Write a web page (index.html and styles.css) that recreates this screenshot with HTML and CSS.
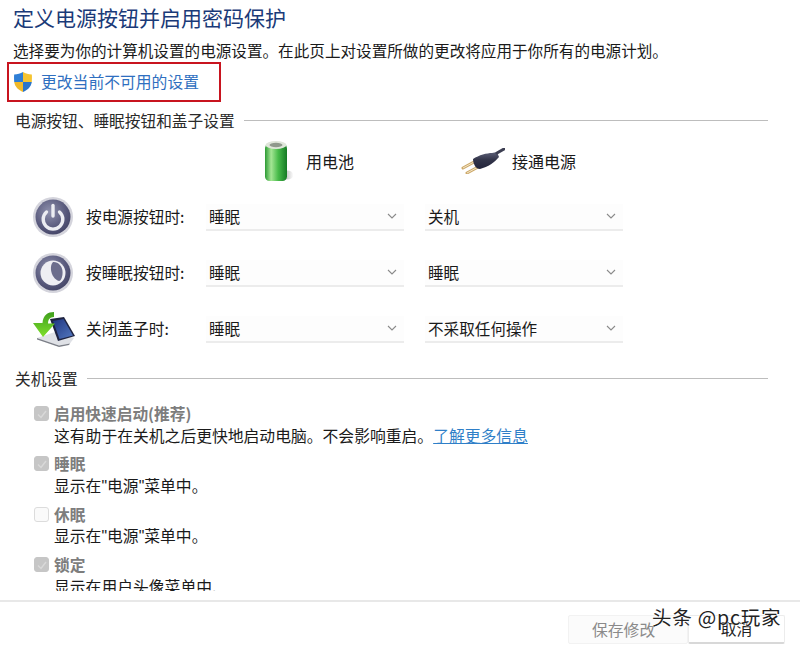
FILE: index.html
```html
<!DOCTYPE html>
<html lang="zh-CN">
<head>
<meta charset="utf-8">
<title>定义电源按钮并启用密码保护</title>
<link rel="stylesheet" href="styles.css">
</head>
<body>
<div class="page">
  <main class="content">
    <h1 class="title">定义电源按钮并启用密码保护</h1>
    <p class="intro">选择要为你的计算机设置的电源设置。在此页上对设置所做的更改将应用于你所有的电源计划。</p>
    <div class="elevate">
      <svg class="shield" viewBox="0 0 20 22" width="20" height="22">
        <path d="M10 1 L10 11 L1.2 11 C1 7 1 5 1.2 3.500 C4.500 3.500 7.500 2.600 10 1Z" fill="#2f7fd6"/>
        <path d="M10 1 C12.500 2.600 15.500 3.500 18.800 3.500 C19 5 19 7 18.800 11 L10 11Z" fill="#f5c431"/>
        <path d="M1.200 11 L10 11 L10 21 C5.500 19 2 16 1.200 11Z" fill="#f0b92a"/>
        <path d="M10 11 L18.800 11 C18 16 14.500 19 10 21Z" fill="#2a74c9"/>
      </svg>
      <a class="elevate-link">更改当前不可用的设置</a>
    </div>

    <div class="section-head first"><span>电源按钮、睡眠按钮和盖子设置</span><i class="rule"></i></div>

    <div class="power-grid">
      <div class="col-head col-one">
        <svg viewBox="0 0 30 44" width="30" height="44">
          <defs>
            <linearGradient id="bat" x1="0" x2="1" y1="0" y2="0">
              <stop offset="0" stop-color="#2c9a34"/><stop offset=".28" stop-color="#a5e695"/><stop offset=".6" stop-color="#48bb4a"/><stop offset="1" stop-color="#157a24"/>
            </linearGradient>
            <linearGradient id="batshadow" x1="0" x2="1" y1="0" y2="0">
              <stop offset="0" stop-color="#9a9a9a"/><stop offset="1" stop-color="#fff"/>
            </linearGradient>
          </defs>
          <ellipse cx="23" cy="36" rx="6.500" ry="4.500" fill="url(#batshadow)"/>
          <rect x="1" y="5" width="22" height="37" rx="4.500" fill="url(#bat)"/>
          <ellipse cx="12" cy="6" rx="10.500" ry="4" fill="#dfe5da"/>
          <ellipse cx="12" cy="6" rx="6.500" ry="2.200" fill="#8f988c"/>
        </svg>
        <span>用电池</span>
      </div>
      <div class="col-head col-two">
        <svg viewBox="0 0 44 26" width="44" height="26">
          <defs>
            <linearGradient id="plugbody" x1="0" x2="0" y1="0" y2="1">
              <stop offset="0" stop-color="#5d6078"/><stop offset=".45" stop-color="#33354a"/><stop offset="1" stop-color="#23243a"/>
            </linearGradient>
          </defs>
          <path d="M2 20 L13 14 M6 25 L17 19" stroke="#cda96a" stroke-width="3" stroke-linecap="round"/>
          <path d="M2 20 L13 14 M6 25 L17 19" stroke="#f3e6c8" stroke-width="1"/>
          <path d="M12 11 C18 7 26 5 31 5 L36 4 L38 9 C34 14 27 19 19 21 C15 21 12 16 12 11Z" fill="url(#plugbody)"/>
          <path d="M36 5 L43 1" stroke="#3d3f52" stroke-width="3" stroke-linecap="round"/>
        </svg>
        <span>接通电源</span>
      </div>

      <svg class="row-icon" viewBox="0 0 42 42" width="42" height="42">
        <defs>
          <radialGradient id="orb" cx=".4" cy=".35" r=".75">
            <stop offset="0" stop-color="#8f91ad"/><stop offset=".65" stop-color="#56577a"/><stop offset="1" stop-color="#3f4060"/>
          </radialGradient>
        </defs>
        <circle cx="20" cy="21" r="20" fill="#d4d4dc"/>
        <circle cx="20" cy="21" r="17.500" fill="url(#orb)"/>
        <path d="M13.500 16 A9.800 9.800 0 1 0 26.500 16" fill="none" stroke="#ecedf2" stroke-width="3.400" stroke-linecap="round"/>
        <path d="M20 9.500 V20" stroke="#ecedf2" stroke-width="3.400" stroke-linecap="round"/>
      </svg>
      <label class="row-label">按电源按钮时:</label>
      <div class="combo"><span>睡眠</span><svg viewBox="0 0 10 6" width="10" height="6"><path d="M1 1 L5 5 L9 1" fill="none" stroke="#8a8a8a" stroke-width="1.100"/></svg></div>
      <div class="combo"><span>关机</span><svg viewBox="0 0 10 6" width="10" height="6"><path d="M1 1 L5 5 L9 1" fill="none" stroke="#8a8a8a" stroke-width="1.100"/></svg></div>

      <svg class="row-icon" viewBox="0 0 42 42" width="42" height="42">
        <circle cx="20" cy="21" r="20" fill="#d4d4dc"/>
        <circle cx="20" cy="21" r="17.500" fill="url(#orb)"/>
        <circle cx="20" cy="21" r="12.500" fill="#eeeef3"/>
        <path d="M20 10 C25 9.500 29 14 29.500 19 C30 24 28 29 26 29 C22 28 18.500 23 18 18 C17.700 15 18 12 20 10Z" fill="#6c6d8c"/>
      </svg>
      <label class="row-label">按睡眠按钮时:</label>
      <div class="combo"><span>睡眠</span><svg viewBox="0 0 10 6" width="10" height="6"><path d="M1 1 L5 5 L9 1" fill="none" stroke="#8a8a8a" stroke-width="1.100"/></svg></div>
      <div class="combo"><span>睡眠</span><svg viewBox="0 0 10 6" width="10" height="6"><path d="M1 1 L5 5 L9 1" fill="none" stroke="#8a8a8a" stroke-width="1.100"/></svg></div>

      <svg class="row-icon" viewBox="0 0 42 42" width="42" height="42">
        <defs>
          <linearGradient id="scr" x1="0" x2="1" y1="0" y2="1">
            <stop offset="0" stop-color="#1f3580"/><stop offset="1" stop-color="#5378c0"/>
          </linearGradient>
          <linearGradient id="arrowfill" x1="0" x2="0" y1="0" y2="1">
            <stop offset="0" stop-color="#3f9f1d"/><stop offset="1" stop-color="#7fe02c"/>
          </linearGradient>
        </defs>
        <path d="M4 30 L26 37.500 L37 35.500 L41 30 L22 24Z" fill="#dfe1e6"/>
        <path d="M4 30 L26 37.500 L37 35.500 L36 37 L26 39 L4 31.500Z" fill="#7d8089"/>
        <path d="M17 11 L31 9 L42 28 L25 33Z" fill="#1e2340"/>
        <path d="M20 13 L30.500 11 L40 27.500 L26.500 31Z" fill="url(#scr)"/>
        <path d="M21 4 C15 4 10 7 9.500 15 L0 15 L10 29 L22 15.500 L15 15.500 C15 11 17 9.500 21 9Z" fill="url(#arrowfill)"/>
      </svg>
      <label class="row-label">关闭盖子时:</label>
      <div class="combo"><span>睡眠</span><svg viewBox="0 0 10 6" width="10" height="6"><path d="M1 1 L5 5 L9 1" fill="none" stroke="#8a8a8a" stroke-width="1.100"/></svg></div>
      <div class="combo"><span>不采取任何操作</span><svg viewBox="0 0 10 6" width="10" height="6"><path d="M1 1 L5 5 L9 1" fill="none" stroke="#8a8a8a" stroke-width="1.100"/></svg></div>
    </div>

    <div class="section-head second"><span>关机设置</span><i class="rule"></i></div>

    <div class="options">
      <div class="option">
        <span class="check on"><svg viewBox="0 0 12 12" width="12" height="12"><path d="M2 6.500 L5 9.500 L10 3" fill="none" stroke="#d9d9d9" stroke-width="1.400"/></svg></span>
        <div class="option-name">启用快速启动(推荐)</div>
        <div class="option-desc">这有助于在关机之后更快地启动电脑。不会影响重启。<a class="more">了解更多信息</a></div>
      </div>
      <div class="option">
        <span class="check on"><svg viewBox="0 0 12 12" width="12" height="12"><path d="M2 6.500 L5 9.500 L10 3" fill="none" stroke="#d9d9d9" stroke-width="1.400"/></svg></span>
        <div class="option-name">睡眠</div>
        <div class="option-desc">显示在<span class="quote">"</span>电源<span class="quote">"</span>菜单中。</div>
      </div>
      <div class="option">
        <span class="check"></span>
        <div class="option-name">休眠</div>
        <div class="option-desc">显示在<span class="quote">"</span>电源<span class="quote">"</span>菜单中。</div>
      </div>
      <div class="option">
        <span class="check on"><svg viewBox="0 0 12 12" width="12" height="12"><path d="M2 6.500 L5 9.500 L10 3" fill="none" stroke="#d9d9d9" stroke-width="1.400"/></svg></span>
        <div class="option-name">锁定</div>
        <div class="option-desc">显示在用户头像菜单中.</div>
      </div>
    </div>
  </main>

  <footer class="footer">
    <button class="btn btn-save">保存修改</button>
    <button class="btn btn-cancel">取消</button>
  </footer>
  <div class="watermark">头条 @pc玩家</div>
</div>
</body>
</html>
```

FILE: styles.css
```css
* { box-sizing: border-box; }
html, body { margin: 0; padding: 0; background: #fff; }
body {
  font-family: "Noto Sans CJK SC", "Noto Sans", sans-serif;
  color: #1a1a1a;
  font-size: 15.600px;
}
.page {
  position: relative;
  width: 800px;
  height: 647px;
  overflow: hidden;
  display: flex;
  flex-direction: column;
}
.content {
  height: 591px;
  overflow: hidden;
  padding: 4px 32px 0 13px;
  flex: none;
}
.title {
  margin: 0;
  font-size: 21px;
  font-weight: 400;
  line-height: 26px;
  color: #1a3a78;
}
.intro {
  margin: 8px 0 0;
  line-height: 24px;
  white-space: nowrap;
}
.elevate {
  margin: 0 0 0 -6px;
  width: 214px;
  height: 40px;
  border: 2px solid #c8141f;
  display: flex;
  align-items: center;
  gap: 8px;
  padding-left: 4px;
}
.shield { flex: none; }
.elevate-link { color: #2f6fc0; font-size: 15.800px; line-height: 22px; }
.section-head {
  display: flex;
  align-items: center;
  gap: 9px;
  margin-left: 2px;
  line-height: 22px;
  font-size: 15.700px;
  color: #2a2a2a;
}
.section-head.first { margin-top: 8px; }
.section-head.second { margin-top: 11px; }
.rule { flex: 1; height: 1px; background: #bdbdbd; margin-top: -2px; }
.power-grid {
  display: grid;
  grid-template-columns: 42px 131px 219px 197px;
  grid-template-rows: 56px 56px 56px 56px;
  align-items: center;
  margin: 0 0 0 20px;
  padding-top: 1px;
}
.col-head { display: flex; align-items: center; font-size: 16px; }
.col-one { grid-column: 3; margin-left: 58px; gap: 12px; }
.col-two { grid-column: 4; margin-left: 36px; gap: 7px; }
.col-head span { line-height: 22px; }
.row-icon { grid-column: 1; }
.row-label { padding-left: 11px; line-height: 22px; white-space: nowrap; font-size: 15.700px; }
.combo {
  width: 198px;
  height: 27px;
  display: flex;
  align-items: center;
  justify-content: space-between;
  padding: 0 7px 0 3px;
  border-bottom: 2px solid #ececec;
  background: #fdfdfd;
  line-height: 22px;
}
.options { margin: 11px 0 0 21px; }
.option {
  display: grid;
  grid-template-columns: 20px 1fr;
  grid-auto-rows: 23px;
  height: 50.400px;
  align-items: center;
}
.check {
  grid-row: 1;
  width: 15px;
  height: 15px;
  margin-top: 2px;
  border-radius: 3px;
  border: 1px solid #dcdcdc;
  background: #fafafa;
  display: flex;
  align-items: center;
  justify-content: center;
}
.check.on { background: #c6c6c6; border-color: #c6c6c6; }
.option-name { color: #7d7d7d; font-weight: 700; font-size: 15.700px; line-height: 23px; margin-top: 2px; }
.option-desc { grid-column: 2; line-height: 23px; white-space: nowrap; font-size: 15.800px; }
.quote { font-family: "Liberation Sans", sans-serif; }
.more { color: #2f7fc8; text-decoration: underline; }
.footer {
  margin-top: 9px;
  flex: 1;
  border-top: 2px solid #e8e8e8;
  display: flex;
  align-items: flex-start;
  justify-content: flex-end;
  padding: 13px 15px 0 0;
}
.btn {
  height: 29px;
  font: inherit;
  font-size: 15.800px;
  line-height: 22px;
  border-radius: 2px;
  padding: 0;
  background: #fff;
}
.btn-save { width: 120px; border: 1px solid #f2f2f2; color: #8a8a8a; background: #fbfbfb; text-align: left; padding-left: 23px; }
.btn-cancel { width: 97px; border: 1px solid #ececec; border-bottom: 2px solid #d8d8d8; color: #222; }
.watermark {
  position: absolute;
  left: 652px;
  top: 604px;
  font-size: 19.500px;
  letter-spacing: .8px;
  line-height: 26px;
  color: #222;
  white-space: nowrap;
  text-shadow: 0 0 2px #fff, 0 0 2px #fff;
}
```
